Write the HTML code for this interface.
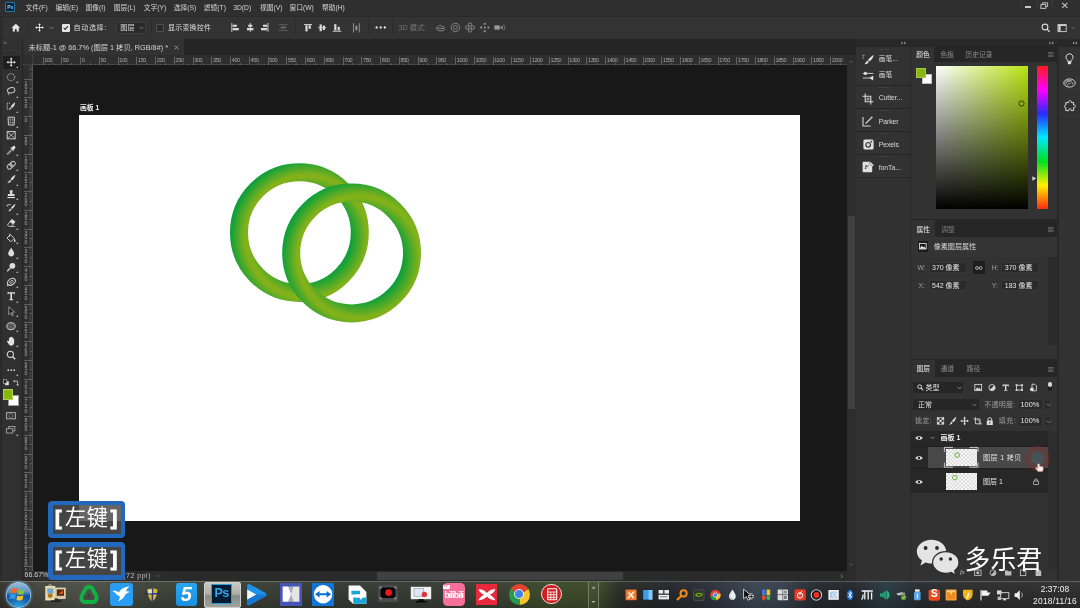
<!DOCTYPE html>
<html lang="zh-CN">
<head>
<meta charset="utf-8">
<title>未标题-1 @ 66.7% (图层 1 拷贝, RGB/8#) *</title>
<style>
*{box-sizing:border-box;margin:0;padding:0}
html,body{width:1080px;height:608px;overflow:hidden;background:#323232}
body{font-family:"Liberation Sans","Noto Sans CJK SC",sans-serif;font-size:6.75px;color:#d6d6d6;line-height:1}
#app{will-change:transform;position:relative;width:1080px;height:608px;overflow:hidden;background:#323232}
.a{position:absolute}
.t{position:absolute;white-space:nowrap;line-height:10px;height:10px}
svg{position:absolute;overflow:visible}
.hr i{position:absolute;top:1.5px;width:1px;height:8.5px;background:#626262}
.hr b{position:absolute;top:7.5px;width:1px;height:2.5px;background:#5a5a5a}
.hr span{position:absolute;top:0.2px;line-height:10px;letter-spacing:-0.35px;white-space:nowrap}
.vr i{position:absolute;left:1px;width:9px;height:1px;background:#5e5e5e}
.vr b{position:absolute;left:7px;width:3px;height:1px;background:#5a5a5a}
.vr span{position:absolute;left:0.8px;width:4px;line-height:4.7px;text-align:center}
</style>
</head>
<body>
<div id="app">
<!-- menu bar -->
<div class="a" style="left:0;top:0;width:1080px;height:16px;background:#2f2f2f"></div>
<!-- options bar -->
<div class="a" style="left:0;top:16px;width:1080px;height:23px;background:#333333;border-top:1px solid #2a2a2a"></div>
<!-- dark strip under options bar -->
<div class="a" style="left:0;top:39px;width:1080px;height:16px;background:#252525"></div>
<!-- tools panel -->
<div class="a" style="left:0;top:39px;width:22px;height:542px;background:#303030;border-left:2px solid #2a2a2a"></div>
<!-- document tab -->
<div class="a" style="left:23px;top:39px;width:161px;height:16px;background:#323232"></div>
<!-- rulers -->
<div class="a" style="left:23px;top:55px;width:824px;height:10px;background:#2e2e2e"></div>
<div class="a" style="left:23px;top:55px;width:10px;height:516px;background:#2e2e2e"></div>
<!-- canvas -->
<div class="a" style="left:33px;top:65px;width:814px;height:506px;background:#181818"></div>
<!-- artboard -->
<div class="a" style="left:79px;top:115px;width:721px;height:406px;background:#ffffff"></div>
<!-- status bar -->
<div class="a" style="left:23px;top:571px;width:833px;height:10px;background:#2c2c2c"></div>
<!-- v scrollbar -->
<div class="a" style="left:847px;top:55px;width:9px;height:516px;background:#2d2d2d"></div>
<div class="a" style="left:848px;top:216px;width:7px;height:193px;background:#404040"></div>
<!-- taskbar -->
<div class="a" style="left:0;top:581px;width:1080px;height:27px;background:#3a3f3c"></div>
<!-- artboard label -->
<div class="t" style="left:80px;top:102.9px;font-size:6.8px;font-weight:bold;color:#f0f0f0">画板 1</div>
<!-- rings -->
<svg class="a" style="left:79px;top:115px" width="721" height="406" viewBox="79 115 721 406">
  <defs>
    <radialGradient id="rg1" gradientUnits="userSpaceOnUse" cx="307.2" cy="237.1" r="78.4">
      <stop offset="0.56" stop-color="#0ea03a"/>
      <stop offset="0.76" stop-color="#82b11a"/>
      <stop offset="0.80" stop-color="#82b11a"/>
      <stop offset="0.98" stop-color="#0ea03a"/>
    </radialGradient>
    <radialGradient id="rg2" gradientUnits="userSpaceOnUse" cx="359.4" cy="257.5" r="78.4">
      <stop offset="0.56" stop-color="#0ea03a"/>
      <stop offset="0.76" stop-color="#82b11a"/>
      <stop offset="0.80" stop-color="#82b11a"/>
      <stop offset="0.98" stop-color="#0ea03a"/>
    </radialGradient>
  </defs>
  <circle cx="299.4" cy="232.6" r="60.4" fill="none" stroke="url(#rg1)" stroke-width="18"/>
  <circle cx="351.6" cy="253" r="60.4" fill="none" stroke="url(#rg2)" stroke-width="18"/>
</svg>
<!-- ===== menu bar ===== -->
<div class="a" style="left:5.3px;top:2.2px;width:9.8px;height:9.6px;background:#05223a;border:1px solid #2278aa;border-radius:1px"></div>
<div class="t" style="left:5.3px;top:2.1px;width:9.8px;text-align:center;font-size:5.2px;font-weight:bold;color:#8ccdf6;letter-spacing:-0.2px">Ps</div>
<div class="t" style="left:25.6px;top:2.5px">文件(F)</div>
<div class="t" style="left:55.6px;top:2.5px">编辑(E)</div>
<div class="t" style="left:85.6px;top:2.5px">图像(I)</div>
<div class="t" style="left:113.8px;top:2.5px">图层(L)</div>
<div class="t" style="left:143.8px;top:2.5px">文字(Y)</div>
<div class="t" style="left:173.8px;top:2.5px">选择(S)</div>
<div class="t" style="left:203.8px;top:2.5px">滤镜(T)</div>
<div class="t" style="left:233.2px;top:2.5px">3D(D)</div>
<div class="t" style="left:260px;top:2.5px">视图(V)</div>
<div class="t" style="left:289.4px;top:2.5px">窗口(W)</div>
<div class="t" style="left:321.9px;top:2.5px">帮助(H)</div>
<!-- window controls -->
<div class="a" style="left:1021px;top:0;width:1px;height:10px;background:#3a3a3a"></div>
<div class="a" style="left:1037px;top:0;width:1px;height:10px;background:#3a3a3a"></div>
<div class="a" style="left:1052px;top:0;width:1px;height:10px;background:#3a3a3a"></div>
<div class="a" style="left:1025px;top:6.3px;width:6px;height:1.3px;background:#c8c8c8"></div>
<svg style="left:1040px;top:2px" width="9" height="8" viewBox="0 0 9 8"><path d="M2.6 2.4V0.8H7.6V4.6H6" fill="none" stroke="#c0c0c0" stroke-width="1"/><rect x="0.9" y="2.6" width="4.8" height="3.8" fill="none" stroke="#c0c0c0" stroke-width="1"/></svg>
<svg style="left:1061px;top:2px" width="8" height="7" viewBox="0 0 8 7"><path d="M1.2 0.8L6.4 5.8M6.4 0.8L1.2 5.8" fill="none" stroke="#c4c4c4" stroke-width="1.1"/></svg>
<!-- ===== options bar ===== -->
<svg style="left:10.9px;top:22.6px" width="9.6" height="9.6" viewBox="0 0 12 12"><path d="M6 1L0.6 5.8H2.2V10.6H4.9V7.4H7.1V10.6H9.8V5.8H11.4Z" fill="#e4e4e4"/></svg>
<div class="a" style="left:27px;top:20px;width:1px;height:15px;background:#2e2e2e"></div><div class="a" style="left:0;top:17px;width:3px;height:22px;background:#2c2c2c"></div>
<svg style="left:35px;top:23px" width="9" height="9" viewBox="0 0 11 11"><path d="M5.5 0.2L7.3 2.4H6.1V4.9H8.6V3.7L10.8 5.5L8.6 7.3V6.1H6.1V8.6H7.3L5.5 10.8L3.7 8.6H4.9V6.1H2.4V7.3L0.2 5.5L2.4 3.7V4.9H4.9V2.4H3.7Z" fill="#e0e0e0"/></svg>
<svg style="left:49px;top:26px" width="5" height="4" viewBox="0 0 5 4"><path d="M0.6 0.8L2.5 2.8L4.4 0.8" fill="none" stroke="#8a8a8a" stroke-width="0.8"/></svg>
<div class="a" style="left:62px;top:24px;width:7.5px;height:7.5px;background:#e6e6e6;border-radius:1px"></div>
<svg style="left:62px;top:24px" width="7.5" height="7.5" viewBox="0 0 8 8"><path d="M1.8 4.1L3.4 5.7L6.3 2.3" fill="none" stroke="#303030" stroke-width="1.2"/></svg>
<div class="t" style="left:73.6px;top:22.6px;font-size:7px;letter-spacing:0.65px;color:#dedede">自动选择:</div>
<div class="a" style="left:116px;top:21.5px;width:30px;height:12.5px;background:#2a2a2a;border:1px solid #3e3e3e;border-radius:1.5px"></div>
<div class="t" style="left:120.3px;top:22.6px;font-size:7.2px;color:#dedede">图层</div>
<svg style="left:139px;top:26px" width="5" height="4" viewBox="0 0 5 4"><path d="M0.6 0.8L2.5 2.8L4.4 0.8" fill="none" stroke="#8a8a8a" stroke-width="0.8"/></svg>
<div class="a" style="left:151px;top:20px;width:1px;height:15px;background:#2a2a2a"></div>
<div class="a" style="left:156px;top:24px;width:7.5px;height:7.5px;background:#2c2c2c;border:1px solid #505050;border-radius:1px"></div>
<div class="t" style="left:168px;top:22.6px;font-size:7px;letter-spacing:0.2px;color:#dedede">显示变换控件</div>
<!-- align icons -->
<svg style="left:231px;top:22px" width="60" height="12" viewBox="0 0 60 12">
  <g fill="#dadada">
    <rect x="0.4" y="1" width="0.9" height="8.8"/><rect x="1.7" y="2.7" width="4.1" height="2.1"/><rect x="1.7" y="6" width="6.1" height="2.3"/>
    <rect x="18.8" y="1" width="0.9" height="8.8"/><rect x="17.2" y="2.7" width="4.1" height="2.1"/><rect x="16" y="6" width="6.4" height="2.3"/>
    <rect x="36.5" y="1" width="0.9" height="8.8"/><rect x="32" y="2.7" width="4.1" height="2.1"/><rect x="30" y="6" width="6.1" height="2.3"/>
  </g>
  <g fill="#686868">
    <rect x="48" y="2.3" width="8.6" height="0.8"/><rect x="49.6" y="4.5" width="5.4" height="2"/><rect x="48" y="8" width="8.6" height="0.8"/>
  </g>
</svg>
<div class="a" style="left:295px;top:20px;width:1px;height:15px;background:#2a2a2a"></div>
<svg style="left:303px;top:22px" width="60" height="12" viewBox="0 0 60 12">
  <g fill="#dadada">
    <rect x="1" y="2" width="8" height="0.9"/><rect x="2.4" y="3.2" width="2.2" height="6.2"/><rect x="5.6" y="3.2" width="2.2" height="3.6"/>
    <rect x="15.2" y="5.3" width="8" height="0.9"/><rect x="16.6" y="2.4" width="2.2" height="6.8"/><rect x="19.8" y="3.6" width="2.2" height="4.4"/>
    <rect x="29.8" y="8.8" width="8.4" height="0.9"/><rect x="31.2" y="2.2" width="2.2" height="6.2"/><rect x="34.6" y="4.8" width="2.2" height="3.6"/>
  </g>
  <g fill="#989898">
    <rect x="50" y="1.2" width="0.9" height="9.2"/><rect x="52.4" y="3.6" width="1.9" height="4.6"/><rect x="55.8" y="1.2" width="0.9" height="9.2"/>
  </g>
</svg>
<div class="a" style="left:368px;top:20px;width:1px;height:15px;background:#2a2a2a"></div>
<svg style="left:375px;top:26px" width="12" height="3" viewBox="0 0 12 3"><circle cx="1.6" cy="1.5" r="1.15" fill="#e6e6e6"/><circle cx="5.7" cy="1.5" r="1.15" fill="#e6e6e6"/><circle cx="9.8" cy="1.5" r="1.15" fill="#e6e6e6"/></svg>
<div class="a" style="left:392px;top:20px;width:1px;height:15px;background:#2a2a2a"></div>
<div class="t" style="left:398.6px;top:22.6px;font-size:7.2px;color:#747474">3D 模式:</div>
<svg style="left:435px;top:21px" width="72" height="13" viewBox="0 0 72 13">
  <g fill="none" stroke="#8c8c8c" stroke-width="0.9">
    <path d="M2 8.6C0.6 8 1 6 2.8 6.2C3 4.2 6 3.6 7 5.4C8.8 5 9.8 6.8 8.8 8.2"/><ellipse cx="5.8" cy="8.6" rx="3.4" ry="1.3"/>
    <circle cx="20.4" cy="6.5" r="4.2"/><circle cx="20.4" cy="6.5" r="1.9"/>
    <circle cx="35" cy="3.6" r="1.7"/><circle cx="35" cy="9.4" r="1.7"/><circle cx="32.1" cy="6.5" r="1.7"/><circle cx="37.9" cy="6.5" r="1.7"/>
  </g>
  <g fill="#9a9a9a">
    <path d="M49.8 1.6L51.6 3.6H48Z M49.8 11.4L51.6 9.4H48Z M44.9 6.5L46.9 4.7V8.3Z M54.7 6.5L52.7 4.7V8.3Z"/><rect x="48.9" y="5.6" width="1.8" height="1.8"/>
    <rect x="59.4" y="4.4" width="5.4" height="4.2"/><path d="M65.2 6.5L67.6 4.6V8.4Z"/>
  </g>
  <path d="M68.6 3.6C69.8 5.4 69.8 7.6 68.6 9.4" fill="none" stroke="#8c8c8c" stroke-width="0.7"/>
</svg>
<!-- search & workspace -->
<svg style="left:1041px;top:23px" width="10" height="10" viewBox="0 0 10 10"><circle cx="4" cy="4" r="2.9" fill="none" stroke="#d8d8d8" stroke-width="1.1"/><path d="M6.1 6.2L8.6 8.8" stroke="#d8d8d8" stroke-width="1.3" fill="none"/></svg>
<svg style="left:1057px;top:24px" width="20" height="9" viewBox="0 0 20 9"><rect x="1" y="0.6" width="8.2" height="7" fill="none" stroke="#d0d0d0" stroke-width="0.9"/><rect x="1.4" y="1" width="2.2" height="6.2" fill="#d0d0d0"/><rect x="1" y="0.6" width="8.2" height="1.4" fill="#d0d0d0"/><path d="M14.6 3L16.2 4.6L17.8 3" fill="none" stroke="#7c7c7c" stroke-width="0.8"/></svg>
<!-- ===== document tab ===== -->
<div class="t" style="left:28.4px;top:42.8px;font-size:7.3px;color:#d4d4d4">未标题-1 @ 66.7% (图层 1 拷贝, RGB/8#) *</div>
<svg style="left:174px;top:45.4px" width="5" height="5" viewBox="0 0 5 5"><path d="M0.7 0.7L4.3 4.3M4.3 0.7L0.7 4.3" stroke="#a8a8a8" stroke-width="0.8" fill="none"/></svg>
<!-- ===== horizontal ruler ===== -->
<div class="a" style="left:33px;top:64px;width:814px;height:1px;background:repeating-linear-gradient(90deg,#5c5c5c 0,#5c5c5c 0.9px,#363636 0.9px,#363636 1.875px)"></div>
<div class="a hr" style="left:23px;top:55px;width:824px;height:10px;overflow:hidden;font-size:5.5px;color:#a8a8a8">
<i style="left:0.95px"></i><b style="left:10.33px"></b>
<i style="left:19.70px"></i><span style="left:21.20px">100</span><b style="left:29.08px"></b>
<i style="left:38.45px"></i><span style="left:39.95px">50</span><b style="left:47.83px"></b>
<i style="left:57.20px"></i><span style="left:58.70px">0</span><b style="left:66.58px"></b>
<i style="left:75.95px"></i><span style="left:77.45px">50</span><b style="left:85.33px"></b>
<i style="left:94.70px"></i><span style="left:96.20px">100</span><b style="left:104.08px"></b>
<i style="left:113.45px"></i><span style="left:114.95px">150</span><b style="left:122.82px"></b>
<i style="left:132.20px"></i><span style="left:133.70px">200</span><b style="left:141.57px"></b>
<i style="left:150.95px"></i><span style="left:152.45px">250</span><b style="left:160.32px"></b>
<i style="left:169.70px"></i><span style="left:171.20px">300</span><b style="left:179.07px"></b>
<i style="left:188.45px"></i><span style="left:189.95px">350</span><b style="left:197.82px"></b>
<i style="left:207.20px"></i><span style="left:208.70px">400</span><b style="left:216.57px"></b>
<i style="left:225.95px"></i><span style="left:227.45px">450</span><b style="left:235.32px"></b>
<i style="left:244.70px"></i><span style="left:246.20px">500</span><b style="left:254.07px"></b>
<i style="left:263.45px"></i><span style="left:264.95px">550</span><b style="left:272.82px"></b>
<i style="left:282.20px"></i><span style="left:283.70px">600</span><b style="left:291.57px"></b>
<i style="left:300.95px"></i><span style="left:302.45px">650</span><b style="left:310.32px"></b>
<i style="left:319.70px"></i><span style="left:321.20px">700</span><b style="left:329.07px"></b>
<i style="left:338.45px"></i><span style="left:339.95px">750</span><b style="left:347.82px"></b>
<i style="left:357.20px"></i><span style="left:358.70px">800</span><b style="left:366.57px"></b>
<i style="left:375.95px"></i><span style="left:377.45px">850</span><b style="left:385.32px"></b>
<i style="left:394.70px"></i><span style="left:396.20px">900</span><b style="left:404.07px"></b>
<i style="left:413.45px"></i><span style="left:414.95px">950</span><b style="left:422.82px"></b>
<i style="left:432.20px"></i><span style="left:433.70px">1000</span><b style="left:441.57px"></b>
<i style="left:450.95px"></i><span style="left:452.45px">1050</span><b style="left:460.32px"></b>
<i style="left:469.70px"></i><span style="left:471.20px">1100</span><b style="left:479.07px"></b>
<i style="left:488.45px"></i><span style="left:489.95px">1150</span><b style="left:497.82px"></b>
<i style="left:507.20px"></i><span style="left:508.70px">1200</span><b style="left:516.58px"></b>
<i style="left:525.95px"></i><span style="left:527.45px">1250</span><b style="left:535.33px"></b>
<i style="left:544.70px"></i><span style="left:546.20px">1300</span><b style="left:554.08px"></b>
<i style="left:563.45px"></i><span style="left:564.95px">1350</span><b style="left:572.83px"></b>
<i style="left:582.20px"></i><span style="left:583.70px">1400</span><b style="left:591.58px"></b>
<i style="left:600.95px"></i><span style="left:602.45px">1450</span><b style="left:610.33px"></b>
<i style="left:619.70px"></i><span style="left:621.20px">1500</span><b style="left:629.08px"></b>
<i style="left:638.45px"></i><span style="left:639.95px">1550</span><b style="left:647.83px"></b>
<i style="left:657.20px"></i><span style="left:658.70px">1600</span><b style="left:666.58px"></b>
<i style="left:675.95px"></i><span style="left:677.45px">1650</span><b style="left:685.33px"></b>
<i style="left:694.70px"></i><span style="left:696.20px">1700</span><b style="left:704.08px"></b>
<i style="left:713.45px"></i><span style="left:714.95px">1750</span><b style="left:722.83px"></b>
<i style="left:732.20px"></i><span style="left:733.70px">1800</span><b style="left:741.58px"></b>
<i style="left:750.95px"></i><span style="left:752.45px">1850</span><b style="left:760.33px"></b>
<i style="left:769.70px"></i><span style="left:771.20px">1900</span><b style="left:779.08px"></b>
<i style="left:788.45px"></i><span style="left:789.95px">1950</span><b style="left:797.83px"></b>
<i style="left:807.20px"></i><span style="left:808.70px">2000</span><b style="left:816.58px"></b>
</div>
<!-- ===== vertical ruler ===== -->
<div class="a" style="left:28.6px;top:65px;width:3.6px;height:506px;background:repeating-linear-gradient(180deg,#474747 0,#474747 0.8px,#2e2e2e 0.8px,#2e2e2e 1.875px);background-position:0 0.45px"></div><div class="a" style="left:32px;top:65px;width:1px;height:506px;background:#545454"></div>
<div class="a vr" style="left:23px;top:65px;width:10px;height:506px;overflow:hidden;font-size:5.1px;color:#a6a6a6">
<i style="top:-5.05px"></i><b style="top:4.33px"></b>
<i style="top:13.70px"></i><span style="top:15.50px">1<br>0<br>0</span><b style="top:23.08px"></b>
<i style="top:32.45px"></i><span style="top:34.25px">5<br>0</span><b style="top:41.83px"></b>
<i style="top:51.20px"></i><span style="top:53.00px">0</span><b style="top:60.58px"></b>
<i style="top:69.95px"></i><span style="top:71.75px">5<br>0</span><b style="top:79.32px"></b>
<i style="top:88.70px"></i><span style="top:90.50px">1<br>0<br>0</span><b style="top:98.07px"></b>
<i style="top:107.45px"></i><span style="top:109.25px">1<br>5<br>0</span><b style="top:116.82px"></b>
<i style="top:126.20px"></i><span style="top:128.00px">2<br>0<br>0</span><b style="top:135.57px"></b>
<i style="top:144.95px"></i><span style="top:146.75px">2<br>5<br>0</span><b style="top:154.32px"></b>
<i style="top:163.70px"></i><span style="top:165.50px">3<br>0<br>0</span><b style="top:173.07px"></b>
<i style="top:182.45px"></i><span style="top:184.25px">3<br>5<br>0</span><b style="top:191.82px"></b>
<i style="top:201.20px"></i><span style="top:203.00px">4<br>0<br>0</span><b style="top:210.57px"></b>
<i style="top:219.95px"></i><span style="top:221.75px">4<br>5<br>0</span><b style="top:229.32px"></b>
<i style="top:238.70px"></i><span style="top:240.50px">5<br>0<br>0</span><b style="top:248.07px"></b>
<i style="top:257.45px"></i><span style="top:259.25px">5<br>5<br>0</span><b style="top:266.82px"></b>
<i style="top:276.20px"></i><span style="top:278.00px">6<br>0<br>0</span><b style="top:285.57px"></b>
<i style="top:294.95px"></i><span style="top:296.75px">6<br>5<br>0</span><b style="top:304.32px"></b>
<i style="top:313.70px"></i><span style="top:315.50px">7<br>0<br>0</span><b style="top:323.07px"></b>
<i style="top:332.45px"></i><span style="top:334.25px">7<br>5<br>0</span><b style="top:341.82px"></b>
<i style="top:351.20px"></i><span style="top:353.00px">8<br>0<br>0</span><b style="top:360.57px"></b>
<i style="top:369.95px"></i><span style="top:371.75px">8<br>5<br>0</span><b style="top:379.32px"></b>
<i style="top:388.70px"></i><span style="top:390.50px">9<br>0<br>0</span><b style="top:398.07px"></b>
<i style="top:407.45px"></i><span style="top:409.25px">9<br>5<br>0</span><b style="top:416.82px"></b>
<i style="top:426.20px"></i><span style="top:428.00px">1<br>0<br>0<br>0</span><b style="top:435.57px"></b>
<i style="top:444.95px"></i><span style="top:446.75px">1<br>0<br>5<br>0</span><b style="top:454.32px"></b>
<i style="top:463.70px"></i><span style="top:465.50px">1<br>1<br>0<br>0</span><b style="top:473.08px"></b>
<i style="top:482.45px"></i><span style="top:484.25px">1<br>1<br>5<br>0</span><b style="top:491.83px"></b>
<i style="top:501.20px"></i><span style="top:503.00px">1<br>2<br>0<br>0</span><b style="top:510.58px"></b>
</div>
<div class="a" style="left:23px;top:55px;width:10px;height:10px;background:#2e2e2e;border-right:1px dotted #4a4a4a;border-bottom:1px dotted #4a4a4a"></div>
<!-- ===== tools panel ===== -->
<div class="a" style="left:21.5px;top:39px;width:1.5px;height:542px;background:#232323"></div>
<svg style="left:3.2px;top:41.4px" width="4.4" height="3.6" viewBox="0 0 6 5"><path d="M0.6 0.8L2.3 2.5L0.6 4.2M3.2 0.8L4.9 2.5L3.2 4.2" fill="none" stroke="#8c8c8c" stroke-width="1"/></svg>
<div class="a" style="left:2px;top:49.5px;width:18px;height:1px;background:#3a3a3a"></div>
<div class="a" style="left:2.5px;top:55.5px;width:17px;height:13.5px;background:#1e1e1e;border-radius:1px"></div>
<svg style="left:6.2px;top:56.8px" width="10.4" height="10.4" viewBox="0 0 12 12"><path d="M6 0.6L7.7 2.7H6.6V5.4H9.3V4.3L11.4 6L9.3 7.7V6.6H6.6V9.3H7.7L6 11.4L4.3 9.3H5.4V6.6H2.7V7.7L0.6 6L2.7 4.3V5.4H5.4V2.7H4.3Z" fill="#e2e2e2"/></svg>
<svg style="left:16.4px;top:66.2px" width="2" height="2" viewBox="0 0 2 2"><path d="M2 0V2H0Z" fill="#b8b8b8"/></svg>
<svg style="left:6.2px;top:71.8px" width="10.4" height="10.4" viewBox="0 0 12 12"><ellipse cx="5.8" cy="6" rx="4.3" ry="4" fill="none" stroke="#d2d2d2" stroke-width="1" stroke-dasharray="1.6 1"/></svg>
<svg style="left:16.4px;top:81.2px" width="2" height="2" viewBox="0 0 2 2"><path d="M2 0V2H0Z" fill="#b8b8b8"/></svg>
<svg style="left:6.2px;top:86.1px" width="10.4" height="10.4" viewBox="0 0 12 12"><ellipse cx="6" cy="5" rx="4.3" ry="3" fill="none" stroke="#d2d2d2" stroke-width="1.1" transform="rotate(-15 6 5)"/><path d="M3 7.4C2 8.4 2.6 9.6 3.6 10.6" fill="none" stroke="#d2d2d2" stroke-width="1"/></svg>
<svg style="left:16.4px;top:95.5px" width="2" height="2" viewBox="0 0 2 2"><path d="M2 0V2H0Z" fill="#b8b8b8"/></svg>
<svg style="left:6.2px;top:101.4px" width="10.4" height="10.4" viewBox="0 0 12 12"><path d="M4.6 2.4H1.4V9.4H6" fill="none" stroke="#d2d2d2" stroke-width="1" stroke-dasharray="1.5 0.9"/><path d="M10.6 1.4C9 2 6.6 4.6 5.4 6.6L7 8C8.8 6.8 10.6 4 10.6 1.4Z" fill="#e0e0e0"/><path d="M5 7.2L6.4 8.6C5.6 9.6 4.4 9.6 3.8 9.4C4.4 8.8 4.4 7.8 5 7.2Z" fill="#e0e0e0"/></svg>
<svg style="left:16.4px;top:110.8px" width="2" height="2" viewBox="0 0 2 2"><path d="M2 0V2H0Z" fill="#b8b8b8"/></svg>
<svg style="left:6.2px;top:116.1px" width="10.4" height="10.4" viewBox="0 0 12 12"><path d="M2.4 1.4L2.8 10.4H9.4L9.8 1.4Z" fill="none" stroke="#d2d2d2" stroke-width="1.1"/><path d="M4.8 1.6V10.2M7.4 1.6V10.2M2.6 4.4H9.6M2.7 7.4H9.5" fill="none" stroke="#d2d2d2" stroke-width="0.6" opacity="0.7"/></svg>
<svg style="left:16.4px;top:125.5px" width="2" height="2" viewBox="0 0 2 2"><path d="M2 0V2H0Z" fill="#b8b8b8"/></svg>
<svg style="left:6.2px;top:130.4px" width="10.4" height="10.4" viewBox="0 0 12 12"><rect x="1.4" y="1.8" width="9.2" height="8.4" fill="none" stroke="#d2d2d2" stroke-width="1.1"/><path d="M1.6 2L10.4 10M10.4 2L1.6 10" stroke="#d2d2d2" stroke-width="0.9" fill="none"/></svg>
<svg style="left:6.2px;top:145.0px" width="10.4" height="10.4" viewBox="0 0 12 12"><path d="M10.2 1.2C11.2 2.2 11 3.4 10.2 4.2L8.8 5.6L9.4 6.2L8.6 7L5 3.4L5.8 2.6L6.4 3.2L7.8 1.8C8.6 1 9.6 0.8 10.2 1.2Z" fill="#e0e0e0"/><path d="M6.2 5L2 9.2L1.6 10.6L3 10.2L7.2 6" fill="none" stroke="#d2d2d2" stroke-width="1"/></svg>
<svg style="left:16.4px;top:154.4px" width="2" height="2" viewBox="0 0 2 2"><path d="M2 0V2H0Z" fill="#b8b8b8"/></svg>
<svg style="left:6.2px;top:159.6px" width="10.4" height="10.4" viewBox="0 0 12 12"><rect x="0.6" y="3.6" width="10.8" height="5" rx="2.3" fill="none" stroke="#d2d2d2" stroke-width="1.1" transform="rotate(-42 6 6)"/><rect x="4.2" y="4.2" width="3.6" height="3.6" fill="#d2d2d2" opacity="0.75" transform="rotate(-42 6 6)"/></svg>
<svg style="left:16.4px;top:169.0px" width="2" height="2" viewBox="0 0 2 2"><path d="M2 0V2H0Z" fill="#b8b8b8"/></svg>
<svg style="left:6.2px;top:174.1px" width="10.4" height="10.4" viewBox="0 0 12 12"><path d="M10.8 1C9 1.6 6.4 4.4 5.2 6.2L6.6 7.6C8.6 6.4 10.6 3.4 10.8 1Z" fill="#e0e0e0"/><path d="M4.6 6.8L6 8.2C5.2 9.8 3.2 10.6 1.4 10.4C2.6 9.6 3 8 4.6 6.8Z" fill="#e0e0e0"/></svg>
<svg style="left:16.4px;top:183.5px" width="2" height="2" viewBox="0 0 2 2"><path d="M2 0V2H0Z" fill="#b8b8b8"/></svg>
<svg style="left:6.2px;top:188.8px" width="10.4" height="10.4" viewBox="0 0 12 12"><path d="M4.4 1.4H7.6V3.6L7 5.8H9.8V8.2H2.2V5.8H5L4.4 3.6Z" fill="#e0e0e0"/><rect x="1.6" y="9.2" width="8.8" height="1.3" fill="#e0e0e0"/></svg>
<svg style="left:16.4px;top:198.2px" width="2" height="2" viewBox="0 0 2 2"><path d="M2 0V2H0Z" fill="#b8b8b8"/></svg>
<svg style="left:6.2px;top:203.4px" width="10.4" height="10.4" viewBox="0 0 12 12"><path d="M10.8 1C9.2 1.6 7 4 5.8 5.8L7 7C8.8 5.8 10.6 3.2 10.8 1Z" fill="#e0e0e0"/><path d="M5.2 6.4L6.4 7.6C5.8 9 4 9.8 2.6 9.6C3.6 9 3.8 7.4 5.2 6.4Z" fill="#e0e0e0"/><path d="M1.2 3.2C2.4 1.6 4.2 1.4 5.6 2.2" fill="none" stroke="#d2d2d2" stroke-width="1"/><path d="M0.6 1.6L1 3.8L3.2 3.4Z" fill="#d2d2d2"/></svg>
<svg style="left:16.4px;top:212.8px" width="2" height="2" viewBox="0 0 2 2"><path d="M2 0V2H0Z" fill="#b8b8b8"/></svg>
<svg style="left:6.2px;top:218.1px" width="10.4" height="10.4" viewBox="0 0 12 12"><path d="M6.6 1.6L10.4 4.2L6.6 9.6H3.4L1.6 8.2Z" fill="none" stroke="#d2d2d2" stroke-width="1"/><path d="M6.6 1.6L10.4 4.2L8.2 7.2L4.4 4.6Z" fill="#e0e0e0"/><path d="M6 9.8H10.8" stroke="#d2d2d2" stroke-width="0.9"/></svg>
<svg style="left:16.4px;top:227.5px" width="2" height="2" viewBox="0 0 2 2"><path d="M2 0V2H0Z" fill="#b8b8b8"/></svg>
<svg style="left:6.2px;top:232.8px" width="10.4" height="10.4" viewBox="0 0 12 12"><path d="M5 1.8L9.6 6.2L5.6 10.2L1.2 5.8Z" fill="none" stroke="#d2d2d2" stroke-width="1.1"/><path d="M4.2 0.8V4.6" stroke="#d2d2d2" stroke-width="1" fill="none"/><path d="M9.8 6.6C10.8 7.8 11.2 8.6 11 9.6C10.6 10.6 9.4 10.4 9.2 9.4C9 8.6 9.4 7.6 9.8 6.6Z" fill="#e0e0e0"/></svg>
<svg style="left:16.4px;top:242.2px" width="2" height="2" viewBox="0 0 2 2"><path d="M2 0V2H0Z" fill="#b8b8b8"/></svg>
<svg style="left:6.2px;top:247.3px" width="10.4" height="10.4" viewBox="0 0 12 12"><path d="M6 1C7.4 3.4 9.4 5.4 9.4 7.6C9.4 9.6 7.8 10.9 6 10.9C4.2 10.9 2.6 9.6 2.6 7.6C2.6 5.4 4.6 3.4 6 1Z" fill="#dcdcdc"/></svg>
<svg style="left:16.4px;top:256.7px" width="2" height="2" viewBox="0 0 2 2"><path d="M2 0V2H0Z" fill="#b8b8b8"/></svg>
<svg style="left:6.2px;top:261.8px" width="10.4" height="10.4" viewBox="0 0 12 12"><circle cx="7.4" cy="4.4" r="3.3" fill="#dcdcdc"/><path d="M5 6.8L1.4 10.6" stroke="#dcdcdc" stroke-width="1.5" fill="none"/></svg>
<svg style="left:16.4px;top:271.2px" width="2" height="2" viewBox="0 0 2 2"><path d="M2 0V2H0Z" fill="#b8b8b8"/></svg>
<svg style="left:6.2px;top:276.6px" width="10.4" height="10.4" viewBox="0 0 12 12"><ellipse cx="6.2" cy="5.6" rx="5" ry="3.4" fill="none" stroke="#d2d2d2" stroke-width="1.2" transform="rotate(-35 6.2 5.6)"/><ellipse cx="6.2" cy="5.6" rx="2.2" ry="1.3" fill="none" stroke="#d2d2d2" stroke-width="0.9" transform="rotate(-35 6.2 5.6)"/><path d="M2.4 8.4L1.2 10.8" stroke="#d2d2d2" stroke-width="1"/></svg>
<svg style="left:16.4px;top:286.0px" width="2" height="2" viewBox="0 0 2 2"><path d="M2 0V2H0Z" fill="#b8b8b8"/></svg>
<svg style="left:6.2px;top:291.2px" width="10.4" height="10.4" viewBox="0 0 12 12"><path d="M1.8 1.4H10.2V3.8H9.2V2.8H6.9V9.4H8.2V10.6H3.8V9.4H5.1V2.8H2.8V3.8H1.8Z" fill="#e4e4e4"/></svg>
<svg style="left:16.4px;top:300.6px" width="2" height="2" viewBox="0 0 2 2"><path d="M2 0V2H0Z" fill="#b8b8b8"/></svg>
<svg style="left:6.2px;top:306.0px" width="10.4" height="10.4" viewBox="0 0 12 12"><path d="M3.2 0.8L3.2 10L5.4 7.8L7 11.2L8.4 10.5L6.8 7.2L9.8 7Z" fill="#1c1c1c" stroke="#c4c4c4" stroke-width="0.8"/></svg>
<svg style="left:16.4px;top:315.4px" width="2" height="2" viewBox="0 0 2 2"><path d="M2 0V2H0Z" fill="#b8b8b8"/></svg>
<svg style="left:6.2px;top:320.8px" width="10.4" height="10.4" viewBox="0 0 12 12"><ellipse cx="5.8" cy="6" rx="4.8" ry="4" fill="#5a5a5a" stroke="#d2d2d2" stroke-width="1.1"/></svg>
<svg style="left:16.4px;top:330.2px" width="2" height="2" viewBox="0 0 2 2"><path d="M2 0V2H0Z" fill="#b8b8b8"/></svg>
<svg style="left:6.2px;top:335.8px" width="10.4" height="10.4" viewBox="0 0 12 12"><path d="M3.4 6.2V2.6C3.4 1.8 4.6 1.8 4.6 2.6V1.6C4.6 0.8 5.8 0.8 5.8 1.6V1.4C5.8 0.6 7 0.6 7 1.4V2C7 1.2 8.2 1.2 8.2 2V3.4C8.2 2.6 9.4 2.6 9.4 3.4V7.6C9.4 9.6 8.2 11.2 6.2 11.2C4.6 11.2 3.8 10.4 3 9.2L1.2 6.4C0.8 5.6 1.8 5 2.4 5.6Z" fill="#e0e0e0"/></svg>
<svg style="left:16.4px;top:345.2px" width="2" height="2" viewBox="0 0 2 2"><path d="M2 0V2H0Z" fill="#b8b8b8"/></svg>
<svg style="left:6.2px;top:350.4px" width="10.4" height="10.4" viewBox="0 0 12 12"><circle cx="5" cy="5" r="3.6" fill="none" stroke="#dadada" stroke-width="1.2"/><path d="M7.6 7.8L10.6 10.8" stroke="#dadada" stroke-width="1.6" fill="none"/></svg>
<svg style="left:6.2px;top:365.0px" width="10.4" height="10.4" viewBox="0 0 12 12"><circle cx="2.6" cy="6" r="1" fill="#dcdcdc"/><circle cx="6" cy="6" r="1" fill="#dcdcdc"/><circle cx="9.4" cy="6" r="1" fill="#dcdcdc"/></svg>
<svg style="left:16.4px;top:374.4px" width="2" height="2" viewBox="0 0 2 2"><path d="M2 0V2H0Z" fill="#b8b8b8"/></svg>
<svg style="left:3px;top:379px" width="18" height="8" viewBox="0 0 18 8"><rect x="2.2" y="2.6" width="3.4" height="3.4" fill="#e8e8e8" stroke="#cfcfcf" stroke-width="0.5"/><rect x="0.4" y="0.8" width="3.4" height="3.4" fill="#1a1a1a" stroke="#cfcfcf" stroke-width="0.6"/><path d="M11.4 2.2H14.6V5.6" fill="none" stroke="#cfcfcf" stroke-width="0.8"/><path d="M11.6 0.8L10 2.2L11.6 3.6Z M13.2 5.2L14.6 6.9L16 5.2Z" fill="#cfcfcf"/></svg>
<div class="a" style="left:8.2px;top:395px;width:10.6px;height:10.6px;background:#ffffff;border:0.6px solid #9a9a9a"></div>
<div class="a" style="left:2.6px;top:389.4px;width:10.6px;height:10.6px;background:#88b80e;border:1px solid #b4d060"></div>
<svg style="left:6.2px;top:411.8px" width="10" height="7.5" viewBox="0 0 12 9"><rect x="0.8" y="0.8" width="10.4" height="7.4" fill="none" stroke="#c8c8c8" stroke-width="1"/><circle cx="6" cy="4.5" r="2.3" fill="none" stroke="#c8c8c8" stroke-width="0.8" stroke-dasharray="1 0.7"/></svg>
<svg style="left:6px;top:426.4px" width="10" height="8.4" viewBox="0 0 13 11"><rect x="3.6" y="0.8" width="8" height="5.6" fill="none" stroke="#c8c8c8" stroke-width="0.9"/><rect x="0.8" y="3.6" width="8" height="5.6" fill="#2d2d2d" stroke="#c8c8c8" stroke-width="0.9"/></svg>
<svg style="left:16.4px;top:434px" width="2" height="2" viewBox="0 0 2 2"><path d="M2 0V2H0Z" fill="#b8b8b8"/></svg>
<!-- ===== right side frame ===== -->
<div class="a" style="left:856px;top:39px;width:224px;height:542px;background:#282828"></div>
<!-- collapsed panel column -->
<div class="a" style="left:856px;top:46.5px;width:53.5px;height:534.5px;background:#313131"></div>
<div class="a" style="left:856px;top:46.5px;width:53.5px;height:130px;background:#323232"></div>
<svg style="left:901px;top:40.5px" width="6" height="4" viewBox="0 0 6 4"><path d="M0.4 0.4L2.2 2L0.4 3.6ZM3.2 0.4L5 2L3.2 3.6Z" fill="#9a9a9a"/></svg>
<div class="a" style="left:878px;top:48.6px;width:11px;height:1px;background:#3e3e3e"></div>
<div class="a" style="left:856px;top:84.5px;width:53.5px;height:1px;background:#262626"></div>
<div class="a" style="left:878px;top:87px;width:11px;height:1px;background:#3e3e3e"></div>
<div class="a" style="left:856px;top:107.5px;width:53.5px;height:1px;background:#262626"></div>
<div class="a" style="left:878px;top:110px;width:11px;height:1px;background:#3e3e3e"></div>
<div class="a" style="left:856px;top:130.5px;width:53.5px;height:1px;background:#262626"></div>
<div class="a" style="left:878px;top:133px;width:11px;height:1px;background:#3e3e3e"></div>
<div class="a" style="left:856px;top:153.5px;width:53.5px;height:1px;background:#262626"></div>
<div class="a" style="left:878px;top:156px;width:11px;height:1px;background:#3e3e3e"></div>
<div class="a" style="left:856px;top:176.5px;width:53.5px;height:1px;background:#262626"></div>
<!-- collapsed panel icons -->
<svg style="left:862px;top:54px" width="13" height="11" viewBox="0 0 13 11"><path d="M0.6 1.4H2.6M0.6 3H2M0.6 4.6H1.6" stroke="#c8c8c8" stroke-width="0.7" fill="none"/><path d="M11.8 1C10 1.8 7.4 4.2 6 6L7.4 7.4C9.4 6.2 11.4 3.4 11.8 1Z" fill="#e0e0e0"/><path d="M5.4 6.6L6.8 8C6 9.6 4 10.4 2.4 10.2C3.6 9.4 4 7.8 5.4 6.6Z" fill="#e0e0e0"/></svg>
<svg style="left:862px;top:70.5px" width="13" height="10" viewBox="0 0 13 10"><path d="M0.8 2.4H11.4" stroke="#d8d8d8" stroke-width="0.9"/><circle cx="3.4" cy="2.4" r="1.6" fill="#e0e0e0"/><path d="M0.8 7H11.4" stroke="#d8d8d8" stroke-width="0.9"/><path d="M11.2 4.6V9.4L7.4 7Z" fill="#e0e0e0"/></svg>
<svg style="left:862px;top:92.5px" width="12" height="12" viewBox="0 0 12 12"><path d="M3.2 0.6V8.8H11.4M0.6 3.2H8.8V11.4" fill="none" stroke="#d8d8d8" stroke-width="1.1"/><rect x="4.6" y="4.6" width="2.8" height="2.8" fill="#9a9a9a"/></svg>
<svg style="left:862px;top:116px" width="12" height="11" viewBox="0 0 12 11"><path d="M1 1V10H8.6" fill="none" stroke="#d8d8d8" stroke-width="1.1"/><path d="M3.6 7.6L10.4 0.8" stroke="#d8d8d8" stroke-width="1.3" fill="none"/></svg>
<svg style="left:863px;top:139px" width="11" height="11" viewBox="0 0 11 11"><rect x="0.4" y="0.4" width="10.2" height="10.2" rx="1.6" fill="#e0e0e0"/><circle cx="5.2" cy="5.8" r="2.3" fill="none" stroke="#323232" stroke-width="1.2"/><circle cx="8.4" cy="2.6" r="0.9" fill="#323232"/></svg>
<svg style="left:862px;top:161px" width="13" height="12" viewBox="0 0 13 12"><path d="M1.6 0.8H7.6L10.2 3.4V10.2C10.2 10.8 9.8 11.2 9.2 11.2H1.6C1 11.2 0.6 10.8 0.6 10.2V1.8C0.6 1.2 1 0.8 1.6 0.8Z" fill="#e0e0e0"/><path d="M8.4 0.6L12.2 4.4L10.2 5.4L7.6 2.8Z" fill="#e0e0e0" stroke="#323232" stroke-width="0.5"/></svg>
<div class="t" style="left:864.4px;top:162px;font-size:6.4px;font-family:'Liberation Serif',serif;font-style:italic;font-weight:bold;color:#323232">F</div>
<div class="t" style="left:878.7px;top:54.4px;color:#dcdcdc">画笔...</div>
<div class="t" style="left:878.7px;top:70.4px;color:#dcdcdc">画笔</div>
<div class="t" style="left:878.7px;top:93.2px;color:#dcdcdc">Cutter...</div>
<div class="t" style="left:878.7px;top:116.5px;color:#dcdcdc">Parker</div>
<div class="t" style="left:878.7px;top:139.6px;color:#dcdcdc">Pexels</div>
<div class="t" style="left:878.7px;top:162.7px;color:#dcdcdc">fonTa...</div>
<!-- main panel column background -->
<div class="a" style="left:911.3px;top:46.5px;width:145.4px;height:534.5px;background:#323232"></div>
<svg style="left:1048.6px;top:40.5px" width="6" height="4" viewBox="0 0 6 4"><path d="M0.4 0.4L2.2 2L0.4 3.6ZM3.2 0.4L5 2L3.2 3.6Z" fill="#9a9a9a"/></svg>
<svg style="left:1071.6px;top:40.5px" width="6" height="4" viewBox="0 0 6 4"><path d="M2.2 0.4L0.4 2L2.2 3.6ZM5 0.4L3.2 2L5 3.6Z" fill="#9a9a9a"/></svg>
<!-- far right icon strip -->
<div class="a" style="left:1058.5px;top:46.5px;width:21.5px;height:534.5px;background:#323232"></div>
<div class="a" style="left:1058.5px;top:71px;width:21.5px;height:1px;background:#2d2d2d"></div>
<div class="a" style="left:1058.5px;top:94.5px;width:21.5px;height:1px;background:#2d2d2d"></div>
<div class="a" style="left:1058.5px;top:117.5px;width:21.5px;height:1px;background:#2d2d2d"></div>
<svg style="left:1064px;top:53px" width="11" height="12" viewBox="0 0 11 12"><path d="M5.5 0.8C7.6 0.8 9 2.4 9 4.2C9 5.6 8.2 6.4 7.4 7.4V8.4H3.6V7.4C2.8 6.4 2 5.6 2 4.2C2 2.4 3.4 0.8 5.5 0.8Z" fill="none" stroke="#dcdcdc" stroke-width="1"/><rect x="3.9" y="9" width="3.2" height="2.2" rx="0.6" fill="#e0e0e0"/></svg>
<svg style="left:1063px;top:77.6px" width="13" height="10" viewBox="0 0 13 10"><ellipse cx="6.5" cy="5" rx="5.7" ry="4.1" fill="none" stroke="#d0d0d0" stroke-width="1"/><path d="M2.6 6.4C3 4 5.4 2.6 7.6 3.4C9.2 4 9.8 5.2 9.8 6.6M4.6 7.8C4.4 6 6 4.8 7.6 5.6M1.6 4.6C3.2 2.2 6.4 1.6 8.6 2.6" fill="none" stroke="#c8c8c8" stroke-width="0.8"/></svg>
<svg style="left:1064px;top:100px" width="12" height="12" viewBox="0 0 12 12"><path d="M4.6 2.6C4.2 1.4 5 0.6 6 0.6C7 0.6 7.8 1.4 7.4 2.6H9.6V5C10.8 4.6 11.4 5.4 11.4 6.2C11.4 7.2 10.6 7.8 9.6 7.4V10.6H7.2C7.6 9.4 6.8 8.8 6 8.8C5.2 8.8 4.4 9.4 4.8 10.6H1.8V7.6C0.8 8 0.6 7.2 0.6 6.4C0.6 5.6 1 4.8 1.8 5.2V2.6Z" fill="none" stroke="#d8d8d8" stroke-width="1"/></svg>
<!-- ===== color panel ===== -->
<div class="a" style="left:911.3px;top:46.5px;width:145.4px;height:15.5px;background:#262626"></div>
<div class="a" style="left:911.3px;top:46.5px;width:23.2px;height:15.5px;background:#323232"></div>
<div class="t" style="left:916.2px;top:49.8px;color:#ececec">颜色</div>
<div class="t" style="left:940.6px;top:49.8px;color:#8e8e8e">色板</div>
<div class="t" style="left:965.6px;top:49.8px;color:#8e8e8e">历史记录</div>
<svg style="left:1048px;top:51.6px" width="6" height="5" viewBox="0 0 6 5"><path d="M0 0.5H5.6M0 1.9H5.6M0 3.3H5.6M0 4.6H5.6" stroke="#6c6c6c" stroke-width="0.8"/></svg>
<div class="a" style="left:921.8px;top:74px;width:10.4px;height:10px;background:#ffffff;border:0.6px solid #bdbdbd"></div>
<div class="a" style="left:915.8px;top:68px;width:10.6px;height:10.2px;background:#88b80e;border:1px solid #a6c846"></div>
<div class="a" style="left:936px;top:66px;width:92px;height:142.5px;background:linear-gradient(to bottom,rgba(0,0,0,0),#000),linear-gradient(to right,#ffffff,#b9e412)"></div>
<svg style="left:1018px;top:100.4px" width="7" height="7" viewBox="0 0 7 7"><circle cx="3.5" cy="3.5" r="2.6" fill="none" stroke="#26330c" stroke-width="0.9"/></svg>
<div class="a" style="left:1037.2px;top:66px;width:11px;height:142.5px;background:linear-gradient(to bottom,#ff1a1a 0%,#ff00ff 16.67%,#2a2aff 33.33%,#00e8ff 50%,#00e020 66.67%,#fff000 83.33%,#ff2a10 100%)"></div>
<svg style="left:1031.6px;top:176px" width="4.4" height="5" viewBox="0 0 4.4 5"><path d="M0.4 0.3L4 2.5L0.4 4.7Z" fill="#e0e0e0"/></svg>
<div class="a" style="left:911.3px;top:218.6px;width:145.4px;height:1.7px;background:#262626"></div>
<!-- ===== properties panel ===== -->
<div class="a" style="left:911.3px;top:220.3px;width:145.4px;height:16.7px;background:#262626"></div>
<div class="a" style="left:911.3px;top:220.3px;width:23.7px;height:16.7px;background:#323232"></div>
<div class="t" style="left:916.5px;top:224.6px;color:#ececec">属性</div>
<div class="t" style="left:941.2px;top:224.6px;color:#7a7a7a">调整</div>
<svg style="left:1048px;top:226.6px" width="6" height="5" viewBox="0 0 6 5"><path d="M0 0.5H5.6M0 1.9H5.6M0 3.3H5.6M0 4.6H5.6" stroke="#6c6c6c" stroke-width="0.8"/></svg>
<div class="a" style="left:911.3px;top:237px;width:145.4px;height:19.5px;background:#343434"></div>
<div class="a" style="left:1048px;top:256.5px;width:8.7px;height:88px;background:#2b2b2b"></div>
<div class="a" style="left:918px;top:241px;width:10.2px;height:10.6px;background:#1c1c1c"></div>
<svg style="left:919.4px;top:243.2px" width="7.6" height="6.4" viewBox="0 0 7.6 6.4"><rect x="0.4" y="0.4" width="6.8" height="5.6" fill="none" stroke="#eeeeee" stroke-width="0.8"/><path d="M0.6 5.8L2.8 2.8L4.2 4.4L5.2 3.4L7 5.8Z" fill="#eeeeee"/></svg>
<div class="t" style="left:933.7px;top:242px;font-size:7.1px;color:#d8d8d8">像素图层属性</div>
<div class="t" style="left:917.4px;top:263px;color:#9c9c9c">W:</div>
<div class="a" style="left:929.4px;top:262px;width:37.6px;height:10.8px;background:#2a2a2a;border:0.6px solid #363636"></div>
<div class="t" style="left:932px;top:263px;font-size:7px;color:#e4e4e4">370 像素</div>
<div class="a" style="left:972.5px;top:261px;width:12.5px;height:13px;background:#1e1e1e"></div>
<svg style="left:975px;top:265.6px" width="7.6" height="4" viewBox="0 0 7.6 4"><circle cx="2" cy="2" r="1.45" fill="none" stroke="#c8c8c8" stroke-width="0.8"/><circle cx="5.6" cy="2" r="1.45" fill="none" stroke="#c8c8c8" stroke-width="0.8"/></svg>
<div class="t" style="left:991.8px;top:263px;color:#9c9c9c">H:</div>
<div class="a" style="left:1001.2px;top:262px;width:38.2px;height:10.8px;background:#2a2a2a;border:0.6px solid #363636"></div>
<div class="t" style="left:1004.8px;top:263px;font-size:7px;color:#e4e4e4">370 像素</div>
<div class="t" style="left:918.6px;top:280.5px;color:#9c9c9c">X:</div>
<div class="a" style="left:929.4px;top:280px;width:37.6px;height:10.8px;background:#2a2a2a;border:0.6px solid #363636"></div>
<div class="t" style="left:932px;top:280.6px;font-size:7px;color:#e4e4e4">542 像素</div>
<div class="t" style="left:991.8px;top:280.5px;color:#9c9c9c">Y:</div>
<div class="a" style="left:1001.2px;top:280px;width:38.2px;height:10.8px;background:#2a2a2a;border:0.6px solid #363636"></div>
<div class="t" style="left:1004.8px;top:280.6px;font-size:7px;color:#e4e4e4">183 像素</div>
<div class="a" style="left:911.3px;top:358.6px;width:145.4px;height:1.7px;background:#262626"></div>
<!-- ===== layers panel ===== -->
<div class="a" style="left:911.3px;top:360.3px;width:145.4px;height:16.7px;background:#262626"></div>
<div class="a" style="left:911.3px;top:360.3px;width:23.7px;height:16.7px;background:#323232"></div>
<div class="t" style="left:916.5px;top:364.4px;color:#ececec">图层</div>
<div class="t" style="left:940.6px;top:364.4px;color:#8e8e8e">通道</div>
<div class="t" style="left:966.8px;top:364.4px;color:#8e8e8e">路径</div>
<svg style="left:1048px;top:366.6px" width="6" height="5" viewBox="0 0 6 5"><path d="M0 0.5H5.6M0 1.9H5.6M0 3.3H5.6M0 4.6H5.6" stroke="#6c6c6c" stroke-width="0.8"/></svg>
<!-- filter row -->
<div class="a" style="left:913px;top:382.2px;width:49.6px;height:10.8px;background:#262626;border-radius:1px"></div>
<svg style="left:916.6px;top:384.4px" width="7" height="7" viewBox="0 0 7 7"><circle cx="2.7" cy="2.7" r="1.9" fill="none" stroke="#d8d8d8" stroke-width="1"/><path d="M4.1 4.2L6.2 6.3" stroke="#d8d8d8" stroke-width="1.1"/></svg>
<div class="t" style="left:925.6px;top:382.7px;font-size:7px;color:#e0e0e0">类型</div>
<svg style="left:957px;top:386px" width="5" height="4" viewBox="0 0 5 4"><path d="M0.6 0.8L2.5 2.8L4.4 0.8" fill="none" stroke="#9a9a9a" stroke-width="0.8"/></svg>
<svg style="left:973px;top:383px" width="66" height="10" viewBox="0 0 66 10">
  <rect x="1.8" y="1.4" width="6.8" height="6.2" fill="none" stroke="#d4d4d4" stroke-width="0.9"/><path d="M2.2 7.2L4.2 4.2L5.4 5.8L6.4 4.8L8.2 7.2Z" fill="#d4d4d4"/>
  <circle cx="19" cy="4.6" r="3.1" fill="none" stroke="#d4d4d4" stroke-width="0.9"/><path d="M16.8 6.8A3.1 3.1 0 0 0 21.2 2.4Z" fill="#d4d4d4"/>
  <path d="M29.6 1.6H35.8V3.4H35V2.8H33.4V7H34.4V7.8H31V7H32V2.8H30.4V3.4H29.6Z" fill="#dcdcdc"/>
  <rect x="43.6" y="2.2" width="5.4" height="4.8" fill="none" stroke="#d4d4d4" stroke-width="0.9"/><rect x="42.6" y="1.2" width="1.8" height="1.8" fill="#d4d4d4"/><rect x="48.2" y="1.2" width="1.8" height="1.8" fill="#d4d4d4"/><rect x="42.6" y="6.2" width="1.8" height="1.8" fill="#d4d4d4"/><rect x="48.2" y="6.2" width="1.8" height="1.8" fill="#d4d4d4"/>
  <path d="M59 1.2H61.8L63.4 2.8V7.8H59Z" fill="none" stroke="#d4d4d4" stroke-width="0.9"/><rect x="57.2" y="4.8" width="3.4" height="3.2" fill="#e0e0e0"/>
</svg>
<div class="a" style="left:1047.8px;top:383.4px;width:4px;height:8px;background:#1f1f1f;border-radius:2px"></div>
<div class="a" style="left:1047.5px;top:382.4px;width:4.6px;height:4.6px;background:#d8d8d8;border-radius:50%"></div>
<!-- blend row -->
<div class="a" style="left:913px;top:399px;width:65.8px;height:11px;background:#262626;border-radius:1px"></div>
<div class="t" style="left:918px;top:399.5px;font-size:7px;color:#e0e0e0">正常</div>
<svg style="left:972.4px;top:403px" width="5" height="4" viewBox="0 0 5 4"><path d="M0.6 0.8L2.5 2.8L4.4 0.8" fill="none" stroke="#8a8a8a" stroke-width="0.8"/></svg>
<div class="t" style="left:984.3px;top:399.5px;font-size:7px;letter-spacing:0.2px;color:#9e9e9e">不透明度:</div>
<div class="a" style="left:1018px;top:399px;width:25px;height:11px;background:#2a2a2a;border:0.6px solid #353535"></div>
<div class="t" style="left:1020.5px;top:399.6px;font-size:7.4px;color:#e4e4e4">100%</div>
<div class="a" style="left:1044.4px;top:399px;width:7px;height:11px;background:#2a2a2a;border:0.6px solid #353535"></div>
<svg style="left:1045.6px;top:403px" width="5" height="4" viewBox="0 0 5 4"><path d="M0.6 0.8L2.5 2.8L4.4 0.8" fill="none" stroke="#8a8a8a" stroke-width="0.8"/></svg>
<!-- lock row -->
<div class="t" style="left:915px;top:416px;font-size:7px;letter-spacing:0.4px;color:#9e9e9e">锁定:</div>
<svg style="left:936px;top:416px" width="60" height="10" viewBox="0 0 60 10">
  <g fill="#dcdcdc"><rect x="1.2" y="1.6" width="2.2" height="2.2"/><rect x="5.6" y="1.6" width="2.2" height="2.2"/><rect x="3.4" y="3.8" width="2.2" height="2.2"/><rect x="1.2" y="6" width="2.2" height="2.2"/><rect x="5.6" y="6" width="2.2" height="2.2"/></g>
  <rect x="1.2" y="1.6" width="6.6" height="6.6" fill="none" stroke="#dcdcdc" stroke-width="0.6"/>
  <path d="M20.2 0.8C18.8 1.6 17 3.6 16 5L17.2 6.2C18.8 5.2 20.2 2.8 20.2 0.8Z" fill="#e0e0e0"/><path d="M15.4 5.6L16.6 6.8C16 8 14.6 8.8 13.2 8.6C14.2 8 14.4 6.6 15.4 5.6Z" fill="#e0e0e0"/>
  <path d="M28.6 0.6L30 2.4H29.1V4.4H31.1V3.5L32.9 4.9L31.1 6.3V5.4H29.1V7.4H30L28.6 9.2L27.2 7.4H28.1V5.4H26.1V6.3L24.3 4.9L26.1 3.5V4.4H28.1V2.4H27.2Z" fill="#e0e0e0"/>
  <path d="M39.4 1.2V7.8H45.8M37.6 3H44V8.4" fill="none" stroke="#d8d8d8" stroke-width="0.9"/><path d="M41 3.2L45 7" stroke="#d8d8d8" stroke-width="0.7"/>
  <rect x="50.8" y="4.6" width="6" height="4.4" rx="0.5" fill="#e0e0e0"/><path d="M52 4.6V3.2C52 1.2 55.6 1.2 55.6 3.2V4.6" fill="none" stroke="#e0e0e0" stroke-width="1"/><rect x="53.3" y="6" width="1" height="1.6" fill="#323232"/>
</svg>
<div class="t" style="left:998.7px;top:416px;font-size:7px;letter-spacing:0.6px;color:#9e9e9e">填充:</div>
<div class="a" style="left:1018px;top:415.6px;width:25px;height:11px;background:#2a2a2a;border:0.6px solid #353535"></div>
<div class="t" style="left:1020.5px;top:416.2px;font-size:7.4px;color:#e4e4e4">100%</div>
<div class="a" style="left:1044.4px;top:415.6px;width:7px;height:11px;background:#2a2a2a;border:0.6px solid #353535"></div>
<svg style="left:1045.6px;top:419.6px" width="5" height="4" viewBox="0 0 5 4"><path d="M0.6 0.8L2.5 2.8L4.4 0.8" fill="none" stroke="#8a8a8a" stroke-width="0.8"/></svg>
<!-- layer list -->
<div class="a" style="left:911.3px;top:431.2px;width:136.7px;height:61.6px;background:#272727"></div>
<div class="a" style="left:1048px;top:431.2px;width:8.7px;height:138px;background:#2d2d2d"></div>
<div class="a" style="left:928px;top:446px;width:120px;height:22.2px;background:#484848"></div>
<div class="a" style="left:911.3px;top:445.6px;width:136.7px;height:0.7px;background:#1f1f1f"></div>
<div class="a" style="left:911.3px;top:468.2px;width:136.7px;height:0.7px;background:#1f1f1f"></div>
<svg style="left:915.4px;top:435.4px" width="8" height="6" viewBox="0 0 8 6"><path d="M0.3 3C1.6 0.6 6.4 0.6 7.7 3C6.4 5.4 1.6 5.4 0.3 3Z" fill="#e6e6e6"/><circle cx="4" cy="3" r="1.25" fill="#272727"/></svg>
<svg style="left:915.4px;top:455px" width="8" height="6" viewBox="0 0 8 6"><path d="M0.3 3C1.6 0.6 6.4 0.6 7.7 3C6.4 5.4 1.6 5.4 0.3 3Z" fill="#e6e6e6"/><circle cx="4" cy="3" r="1.25" fill="#272727"/></svg>
<svg style="left:915.4px;top:478.6px" width="8" height="6" viewBox="0 0 8 6"><path d="M0.3 3C1.6 0.6 6.4 0.6 7.7 3C6.4 5.4 1.6 5.4 0.3 3Z" fill="#e6e6e6"/><circle cx="4" cy="3" r="1.25" fill="#272727"/></svg>
<svg style="left:930px;top:436.4px" width="5" height="4" viewBox="0 0 5 4"><path d="M0.6 0.8L2.5 2.8L4.4 0.8" fill="none" stroke="#9a9a9a" stroke-width="0.8"/></svg>
<div class="t" style="left:940.6px;top:433.4px;font-size:7px;font-weight:bold;color:#f0f0f0">画板 1</div>
<!-- thumbnails -->
<div class="a" style="left:946.2px;top:448.8px;width:30.8px;height:17.4px;background-color:#ffffff;background-image:conic-gradient(#d6d6d6 25%,#ffffff 0 50%,#d6d6d6 0 75%,#ffffff 0);background-size:3.8px 3.8px"></div>
<svg style="left:944.4px;top:447.2px" width="34.4" height="20.6" viewBox="0 0 34.4 20.6"><path d="M0.4 5V0.4H9M25.4 0.4H34V5M34 15.6V20.2H25.4M9 20.2H0.4V15.6" fill="none" stroke="#e8e8e8" stroke-width="0.8"/><circle cx="13.2" cy="8" r="2.3" fill="none" stroke="#5caa2a" stroke-width="0.9"/></svg>
<div class="t" style="left:983px;top:453px;font-size:7.1px;letter-spacing:0.35px;color:#e2e2e2">图层 1 拷贝</div>
<div class="a" style="left:946.2px;top:473px;width:30.8px;height:17px;background-color:#ffffff;background-image:conic-gradient(#d6d6d6 25%,#ffffff 0 50%,#d6d6d6 0 75%,#ffffff 0);background-size:3.8px 3.8px"></div>
<svg style="left:944.4px;top:471.4px" width="34.4" height="20.6" viewBox="0 0 34.4 20.6"><circle cx="10.8" cy="6.6" r="2.3" fill="none" stroke="#5caa2a" stroke-width="0.9"/></svg>
<div class="t" style="left:983px;top:476.6px;font-size:7px;color:#e2e2e2">图层 1</div>
<svg style="left:1033.2px;top:477.9px" width="6.2" height="7.1" viewBox="0 0 7 8"><rect x="0.7" y="3.4" width="5.6" height="4" rx="0.5" fill="none" stroke="#c4c4c4" stroke-width="0.9"/><path d="M1.9 3.4V2.4C1.9 0.6 5.1 0.6 5.1 2.4V3.4" fill="none" stroke="#c4c4c4" stroke-width="0.9"/></svg>
<!-- click highlight + cursor -->
<svg style="left:1023px;top:445px" width="30" height="30" viewBox="0 0 30 30">
  <defs><radialGradient id="clk" gradientUnits="userSpaceOnUse" cx="14.4" cy="13.2" r="13.4"><stop offset="0" stop-color="#44565f" stop-opacity="0.85"/><stop offset="0.42" stop-color="#46555c" stop-opacity="0.8"/><stop offset="0.62" stop-color="#6a3a36" stop-opacity="0.62"/><stop offset="0.86" stop-color="#7a2e2a" stop-opacity="0.45"/><stop offset="1" stop-color="#7a2e2a" stop-opacity="0"/></radialGradient></defs><circle cx="14.4" cy="13.2" r="13.4" fill="url(#clk)"/>
  <path d="M14.6 19.6V23.4L13.4 22.6C12.8 22.2 12.2 23 12.8 23.6L15 26.6H19.4L20.2 24.4V22.4C20.2 21.8 19.4 21.6 19.2 22C19 21.4 18.2 21.2 18 21.8C17.8 21.2 17 21 16.6 21.6V19.6C16.6 18.6 14.6 18.6 14.6 19.6Z" fill="#fbeeee" stroke="#d08a8a" stroke-width="0.5"/>
</svg>
<!-- layers bottom icons -->
<svg style="left:958px;top:568px" width="86" height="10" viewBox="0 0 86 10">
  <g fill="none" stroke="#bcbcbc" stroke-width="0.9">
    <rect x="16.6" y="2" width="6.4" height="5.4"/><circle cx="35" cy="4.8" r="2.9"/><rect x="62.4" y="2" width="5.4" height="5.6"/>
  </g>
  <g fill="#bcbcbc"><circle cx="19.8" cy="4.7" r="1.5"/><path d="M33 6.9A2.9 2.9 0 0 0 37 2.7Z"/><path d="M47 2.4H49.6L50.4 3.2H53.4V7.6H47Z"/><path d="M77.6 2.6H83.2V8H77.6Z"/><rect x="79" y="1.6" width="2.8" height="0.9"/></g>
</svg>
<div class="t" style="left:960px;top:567.4px;font-size:6.6px;font-style:italic;font-family:'Liberation Serif',serif;color:#c4c4c4">fx</div>
<!-- ===== status bar ===== -->
<div class="t" style="left:24.6px;top:570.4px;font-size:7px;color:#d0d0d0">66.67%</div>
<div class="a" style="left:52px;top:570.6px;width:99px;height:10px;overflow:hidden"><div class="t" style="right:0;top:0;font-size:7px;letter-spacing:0.5px;color:#bcbcbc">1920 像素 x 1080 像素 (72 ppi)</div></div>
<svg style="left:157px;top:574px" width="3" height="4" viewBox="0 0 4 5"><path d="M0.8 0.6L3 2.5L0.8 4.4" fill="none" stroke="#707070" stroke-width="0.9"/></svg>
<!-- h scrollbar -->
<div class="a" style="left:165px;top:571px;width:680px;height:10px;background:#2a2a2a"></div>
<div class="a" style="left:377px;top:572.3px;width:246px;height:7.4px;background:#404040"></div>
<svg style="left:840px;top:574.4px" width="3.6" height="4.5" viewBox="0 0 4 5"><path d="M0.8 0.6L3 2.5L0.8 4.4" fill="none" stroke="#8a8a8a" stroke-width="0.9"/></svg>
<svg style="left:849.3px;top:59.6px" width="4" height="3.2" viewBox="0 0 5 4"><path d="M0.6 3L2.5 1L4.4 3" fill="none" stroke="#6a6a6a" stroke-width="0.9"/></svg>
<svg style="left:849.3px;top:562.6px" width="4" height="3.2" viewBox="0 0 5 4"><path d="M0.6 1L2.5 3L4.4 1" fill="none" stroke="#6a6a6a" stroke-width="0.9"/></svg>
<!-- key press overlays -->
<div class="a" style="left:48.4px;top:501px;width:76.6px;height:37.2px;background:#2268bc;border-radius:4px"></div>
<div class="a" style="left:52.6px;top:505.2px;width:68.2px;height:28.8px;background:linear-gradient(to right,#444444 0,#444444 26.4px,#666666 26.4px,#666666 100%);border-radius:0.5px"></div>
<div class="a" style="left:52.6px;top:521px;width:68.2px;height:13px;background:#444444"></div>
<div class="t" style="left:48.4px;top:501px;width:76.6px;height:37.2px;line-height:33.8px;text-align:center;font-size:21.2px;letter-spacing:0.6px;color:#ffffff"><b style="font-weight:bold;font-size:19.5px;position:relative;top:-0.4px;left:-3.5px;letter-spacing:0;-webkit-text-stroke:1.1px #fff">[</b>左键<b style="font-weight:bold;font-size:19.5px;position:relative;top:-0.4px;left:2.3px;letter-spacing:0;-webkit-text-stroke:1.1px #fff">]</b></div>
<div class="a" style="left:48.4px;top:542.4px;width:76.6px;height:37.2px;background:#2268bc;border-radius:4px"></div>
<div class="a" style="left:52.6px;top:546.6px;width:68.2px;height:28.8px;background:#444444;border-radius:0.5px"></div>
<div class="t" style="left:48.4px;top:542.4px;width:76.6px;height:37.2px;line-height:33.8px;text-align:center;font-size:21.2px;letter-spacing:0.6px;color:#ffffff"><b style="font-weight:bold;font-size:19.5px;position:relative;top:-0.4px;left:-3.5px;letter-spacing:0;-webkit-text-stroke:1.1px #fff">[</b>左键<b style="font-weight:bold;font-size:19.5px;position:relative;top:-0.4px;left:2.3px;letter-spacing:0;-webkit-text-stroke:1.1px #fff">]</b></div>
<!-- ===== windows taskbar ===== -->
<div class="a" style="left:0;top:581px;width:1080px;height:27px;background:linear-gradient(to right,#35342f 0,#46483f 4%,#4c5049 8%,#3e4339 14%,#3a4035 22%,#353a33 30%,#363b34 40%,#394132 47%,#3c4b2b 51%,#3b4829 55.5%,#2a2c28 57.5%,#25272a 62%,#2b323b 66%,#3a4551 70%,#36404c 72.5%,#262a30 75.5%,#24282c 79%,#2a3b42 82%,#272c32 85%,#2c2c2c 88%,#2f2f2f 100%)"></div>
<div class="a" style="left:0;top:581px;width:1080px;height:27px;background:linear-gradient(to bottom,rgba(255,255,255,0.28) 0,rgba(255,255,255,0.2) 0.9px,rgba(255,255,255,0.03) 1.4px,rgba(0,0,0,0) 45%,rgba(0,0,0,0.16) 100%)"></div>
<!-- start orb -->
<div class="a" style="left:5.8px;top:582.4px;width:25.2px;height:25.2px;border-radius:50%;background:radial-gradient(ellipse 70% 45% at 50% 100%,#35b4f0 0,rgba(40,150,230,0) 100%),linear-gradient(to bottom,#9cc0dc 0,#5c93c6 38%,#1459a8 52%,#0c3f8a 100%);box-shadow:0 0 0 0.8px #a8cfe8 inset,0 0 2.4px 0.8px rgba(130,195,240,0.5)"></div>
<svg style="left:9.4px;top:585.4px" width="18" height="18" viewBox="0 0 16 16"><path d="M2 3.4C3.8 2.4 5.6 2.6 7.2 3.6L6.4 7.6C4.8 6.6 3 6.6 1.2 7.4Z" fill="#f26a24"/><path d="M8.4 4C10 5 11.8 5 13.8 4L13 8C11.2 9 9.4 8.8 7.6 7.8Z" fill="#86c440"/><path d="M1 8.6C2.8 7.8 4.6 7.8 6.2 8.8L5.4 12.8C3.8 11.8 2 11.8 0.2 12.6Z" fill="#2f9be8"/><path d="M7.4 9.2C9 10.2 10.8 10.2 12.8 9.2L12 13.2C10.2 14.2 8.4 14 6.6 13Z" fill="#f8bf26"/></svg>
<!-- icon: devices -->
<svg style="left:45px;top:584px" width="21" height="22" viewBox="0 0 21 22"><rect x="0.8" y="2.4" width="9" height="13.6" fill="#e8d9a0" stroke="#f4ecd0" stroke-width="0.8"/><rect x="2.2" y="4.4" width="6.2" height="5" fill="#6aa8d8"/><circle cx="5.2" cy="11.6" r="2.4" fill="#a8761a"/><path d="M3.4 2.4C3.4 0.2 7 0.2 7 2.4" fill="none" stroke="#e8e0c0" stroke-width="0.8"/><rect x="10.6" y="4" width="9.6" height="10.4" fill="#d8c9a0" stroke="#f0e8d0" stroke-width="0.7"/><rect x="11.8" y="5.4" width="7.2" height="6.4" fill="#5a2a14"/><path d="M13.4 10.2L17.6 6.4L18 9.4Z" fill="#f06428"/><rect x="6" y="16.4" width="10" height="1.6" fill="#1e1e1e"/><rect x="9.6" y="14.4" width="3" height="2.2" fill="#2a2a2a"/></svg>
<!-- icon: green recycle -->
<svg style="left:78px;top:583.6px" width="22" height="22" viewBox="0 0 22 22"><path d="M11 2.8C12.6 2.8 13.8 3.6 14.6 5L18.2 11.6C19.6 14.4 18 18 14.4 18H7.6C4 18 2.4 14.4 3.8 11.6L7.4 5C8.2 3.6 9.4 2.8 11 2.8Z" fill="none" stroke="#10b244" stroke-width="3.9" stroke-linejoin="round"/><path d="M11 8.4L13.4 13.6H8.6Z" fill="#3e4339"/></svg>
<!-- icon: xunlei bird -->
<div class="a" style="left:110px;top:583.4px;width:22.6px;height:22.6px;border-radius:3px;background:#2a9cf2"></div>
<svg style="left:110px;top:583.4px" width="22.6" height="22.6" viewBox="0 0 22.6 22.6"><path d="M2.4 8.2C4.8 7.4 7 8 8.8 9.4C10.8 6.2 14.4 4 19.4 3.6C17.6 5.2 16.6 6.6 16 8.4C17.6 8.2 19 8.4 20 9C17.8 9.6 16 10.8 14.8 12.600000000000001C13.6 15.4 11.2 17.4 8 18.2C9.4 16.4 10 14.8 9.8 13.2C8 12.6 6.4 11.6 5.4 10C4.6 9.2 3.6 8.6 2.4 8.2Z" fill="#ffffff"/></svg>
<!-- icon: shield -->
<svg style="left:143px;top:586.6px" width="19" height="16" viewBox="0 0 19 16"><path d="M0.6 6.4L9.4 2.6L18.4 6.4L9.4 9.4Z" fill="#2a2a4a" opacity="0.8"/><path d="M9.4 0.8C11 1.8 12.8 2.2 14.4 2.2C14.4 7.6 13 12 9.4 14.6C5.8 12 4.4 7.6 4.4 2.2C6 2.2 7.8 1.8 9.4 0.8Z" fill="#d8b82a"/><path d="M9.4 0.8V14.6M4.6 6.8H14.2" stroke="#2a3a8a" stroke-width="1.5"/><path d="M5 2.6H9V6.4H5Z" fill="#f0f0e0" opacity="0.75"/></svg>
<!-- icon: 5 -->
<div class="a" style="left:175.6px;top:583.2px;width:21.6px;height:22.4px;border-radius:2.4px;background:linear-gradient(#2aa6f0,#1a8fe0)"></div>
<div class="t" style="left:175.6px;top:583.2px;width:21.6px;height:22.4px;line-height:22px;text-align:center;font-size:20px;font-weight:bold;font-style:italic;color:#ffffff">5</div>
<!-- active Ps button -->
<div class="a" style="left:203.8px;top:581.6px;width:37px;height:26.4px;border-radius:2px;background:linear-gradient(to bottom,#d0d0cc 0,#b4b5b0 45%,#8e908c 55%,#a8aaa6 100%);border:0.8px solid #d8d8d4;opacity:0.95"></div>
<div class="a" style="left:211.4px;top:584.4px;width:20.6px;height:19.6px;background:#001c33;border:1.6px solid #2b9cd8"></div>
<div class="t" style="left:211.4px;top:584.4px;width:20.6px;height:19.6px;line-height:19.4px;text-align:center;font-size:12.4px;font-weight:bold;color:#35a6ea;letter-spacing:-0.3px">Ps</div>
<!-- icon: blue play -->
<svg style="left:246px;top:583px" width="22" height="23" viewBox="0 0 22 23"><path d="M1.2 2.6C1.2 1.2 2.4 0.6 3.6 1.2L19.6 10C20.8 10.8 20.8 12.4 19.6 13.2L3.6 22C2.4 22.6 1.2 22 1.2 20.6Z" fill="#1f93ea"/><path d="M1.2 11.6H20.4C20.4 12.2 20.2 12.8 19.6 13.2L3.6 22C2.4 22.6 1.2 22 1.2 20.6Z" fill="#1678d2"/><path d="M1.2 6.6L10.2 11.6L1.2 16.6Z" fill="#ffffff"/></svg>
<!-- icon: M -->
<div class="a" style="left:280px;top:583.2px;width:22px;height:22.4px;background:#4455b6"></div>
<svg style="left:280px;top:583.2px" width="22" height="22.4" viewBox="0 0 22 22.4"><path d="M2.6 3.4H8.4L11.4 11.2L8.4 18.8H2.6Z" fill="#ffffff"/><path d="M13.4 3.4H19.4V18.8H13.4L10.6 11.2Z" fill="#e4e4e4"/><path d="M8.4 3.4L11.4 11.2L8.4 18.8L13.4 18.8L10.6 11.2L13.4 3.4Z" fill="#b0b0b8"/></svg>
<!-- icon: teamviewer -->
<div class="a" style="left:312.2px;top:583.2px;width:22.2px;height:22.4px;background:#0e76d6"></div>
<svg style="left:312.2px;top:583.2px" width="22.2" height="22.4" viewBox="0 0 22.2 22.4"><circle cx="11.1" cy="11.2" r="9.2" fill="#ffffff"/><path d="M3 11.2L7.6 8V10.2H14.6V8L19.2 11.2L14.6 14.4V12.2H7.6V14.4Z" fill="#0e6fd0"/></svg>
<!-- icon: cyan arrow doc -->
<svg style="left:348px;top:585.4px" width="19" height="19.4" viewBox="0 0 19 19.4"><path d="M0.6 0.6H12L18.4 7V18.8H5L0.6 14.6Z" fill="#ffffff"/><path d="M3.4 5.8H12V9.4H3.4Z M5.2 12.4H18.4V18.8H5.2Z" fill="#18a6da"/><path d="M8.4 9.4H12V7L17 11L12 15V12.6H8.4Z" fill="#ffffff"/></svg>
<!-- icon: recorder -->
<div class="a" style="left:378px;top:585.4px;width:20px;height:16.4px;background:#4a4a4c"></div>
<svg style="left:378px;top:585.4px" width="20" height="16.4" viewBox="0 0 20 16.4"><rect x="2.6" y="2.6" width="14.8" height="10.4" rx="3" fill="#050505"/><circle cx="10.6" cy="7.6" r="3.4" fill="#f01818"/><path d="M2.2 4V2.2H4M16 2.2H17.8V4M17.8 12V13.8H16M4 13.8H2.2V12" fill="none" stroke="#d0d0d0" stroke-width="0.6"/></svg>
<!-- icon: screen rec -->
<svg style="left:410px;top:585.6px" width="22" height="18" viewBox="0 0 22 18"><rect x="0.8" y="0.8" width="20.4" height="12.4" fill="#f2f2f2"/><rect x="4" y="2.6" width="9.6" height="7.6" fill="#dfe6f4" stroke="#8a94b0" stroke-width="0.6"/><circle cx="14.4" cy="8.4" r="2.7" fill="#e0363a"/><rect x="8.4" y="13.2" width="5.2" height="1.8" fill="#0a0a0a"/><rect x="5.6" y="15" width="10.8" height="1.5" fill="#0a0a0a"/></svg>
<!-- icon: pink bilibili -->
<div class="a" style="left:442.6px;top:583.2px;width:22.4px;height:22.4px;border-radius:4.4px;background:#f6709a"></div>
<div class="a" style="left:443px;top:585.2px;width:6.6px;height:3.4px;background:#ffffff;border-radius:0.8px 0.8px 1.6px 0.8px"></div>
<div class="t" style="left:443.6px;top:584.4px;font-size:3px;line-height:5px;height:5px;font-weight:bold;color:#f6709a">UP</div>
<div class="t" style="left:441.6px;top:590.4px;width:24.4px;text-align:center;font-size:8.6px;font-weight:bold;letter-spacing:-0.75px;color:#ffffff">bilibili</div>
<!-- icon: red X -->
<div class="a" style="left:475.6px;top:583.6px;width:21.8px;height:21.6px;background:#e8293b"></div>
<svg style="left:475.6px;top:583.6px" width="21.8" height="21.6" viewBox="0 0 21.8 21.6"><path d="M2.4 5.4C6 5 8.8 6.8 10.9 9C13 6.8 15.8 5 19.4 5.4C18.2 7.8 16.2 9.6 13.6 10.8C16.2 12 18.2 13.8 19.4 16.2C15.8 16.6 13 14.8 10.9 12.6C8.8 14.8 6 16.6 2.4 16.2C3.6 13.8 5.6 12 8.2 10.8C5.6 9.6 3.6 7.8 2.4 5.4Z" fill="#ffffff"/></svg>
<!-- icon: chrome -->
<div class="a" style="left:508.6px;top:583.8px;width:21px;height:21px;border-radius:50%;background:conic-gradient(from -60deg,#e0432f 0 120deg,#f7c52a 120deg 240deg,#279a4b 240deg 360deg)"></div>
<div class="a" style="left:514.2px;top:589.4px;width:9.8px;height:9.8px;border-radius:50%;background:#3f85e8;border:1.5px solid #f4f4f4"></div>
<!-- icon: red calculator -->
<div class="a" style="left:541.4px;top:583.8px;width:20.6px;height:20.6px;border-radius:50%;background:#cf1f22;border:1.1px solid #f4dcdc"></div>
<svg style="left:546.6px;top:588px" width="10.4" height="12.4" viewBox="0 0 10.4 12.4"><rect x="0.7" y="0.7" width="9" height="11" rx="0.8" fill="none" stroke="#fff" stroke-width="1.1"/><path d="M1 4H9.6M1 6.8H9.6M1 9.4H9.6M3.8 4V11.4M6.8 4V11.4" stroke="#fff" stroke-width="0.8"/></svg>
<!-- toolbar chevrons -->
<div class="a" style="left:588.4px;top:581.6px;width:10.2px;height:26.4px;border-left:0.8px solid rgba(190,200,170,0.4);border-right:0.8px solid rgba(190,200,170,0.4);background:rgba(255,255,255,0.03)"></div>
<svg style="left:591px;top:585.6px" width="5" height="18" viewBox="0 0 5 18"><path d="M0.4 2.6L2.5 0.6L4.6 2.6ZM0.4 15L2.5 17L4.6 15Z" fill="#b8bca8"/></svg>
<!-- ===== system tray ===== -->
<svg style="left:624px;top:588px" width="400" height="14" viewBox="0 0 400 14">
  <!-- 630: orange x -->
  <rect x="1.6" y="1.6" width="11" height="10.6" fill="#f07a32"/><path d="M4 10.2L10.2 3.4M4.4 4.6C6.2 6 8.4 8.2 9.8 10.2" stroke="#fff2e0" stroke-width="1.5" fill="none"/>
  <!-- 648: blue doc -->
  <rect x="19.2" y="2" width="9.2" height="9.6" fill="#3c9fe8"/><rect x="24.6" y="2" width="3.8" height="9.6" fill="#8cc8f4"/>
  <!-- 664: grid -->
  <rect x="34.6" y="2" width="4.6" height="3.6" fill="#e8e8e8"/><rect x="40.4" y="2" width="4.6" height="3.6" fill="#e8e8e8"/><rect x="34.6" y="6.8" width="10.4" height="4.6" fill="#f0f0f0"/><path d="M36 8.8H43.6" stroke="#5a5a5a" stroke-width="0.8"/>
  <!-- 681: orange ring magnifier -->
  <circle cx="59.6" cy="5.4" r="3.1" fill="none" stroke="#f08a1c" stroke-width="2"/><path d="M57 8.2L53 12" stroke="#f08a1c" stroke-width="2.2"/>
  <!-- 698: nvidia -->
  <rect x="69.6" y="1.8" width="10.4" height="10.6" rx="1" fill="#2e332c" stroke="#5a5f58" stroke-width="0.7"/><path d="M71.6 7C73 5 76 4.6 78.200000000000003 6.4C76.4 8.6 73.6 9 71.6 7Z" fill="none" stroke="#76b900" stroke-width="1.1"/>
  <!-- 715: chrome -->
  <circle cx="91.4" cy="7" r="5.2" fill="#e0432f"/><path d="M91.4 7L86.6 9.4A5.2 5.2 0 0 0 92.4 12.100000000000001Z" fill="#279a4b"/><path d="M91.4 7L92.4 12.1A5.2 5.2 0 0 0 96.4 5.6Z" fill="#f7c52a"/><path d="M91.4 7L86.4 8.4A5.2 5.2 0 0 0 89.4 11.8Z" fill="#279a4b"/><circle cx="91.4" cy="7" r="2.2" fill="#3f85e8" stroke="#f4f4f4" stroke-width="0.7"/>
  <!-- 732: water drop -->
  <path d="M108.4 1.6C109.8 4 111.8 6 111.8 8.4C111.8 10.4 110.2 11.8 108.4 11.8C106.6 11.8 105 10.4 105 8.4C105 6 107 4 108.4 1.6Z" fill="#e8eef2"/><path d="M106.2 8.6C106.4 10 107.4 10.8 108.6 10.8" stroke="#8aa0b0" stroke-width="0.8" fill="none"/>
  <!-- 749: mouse cursor arrow -->
  <path d="M119.6 1.2V10.8L122.2 8.6L124 12.2L125.8 11.4L124 8L127.2 7.6Z" fill="#0a0a0a" stroke="#f0f0f0" stroke-width="0.8"/><path d="M124.4 8.4H130M127.2 5.6V11.2" stroke="#f0f0f0" stroke-width="2.2"/><path d="M124.8 8.4H129.6M127.2 6V10.8" stroke="#101010" stroke-width="0.9"/>
  <!-- 766: colourful -->
  <rect x="138" y="1.6" width="3.6" height="5.4" fill="#3a7ae0"/><rect x="142.6" y="1.6" width="3.6" height="5.4" fill="#e8c82a"/><path d="M138 7.4H141.6V11L139.8 12.4L138 11Z" fill="#e04a3a"/><path d="M142.6 7.4H146.2V11L144.4 12.4L142.6 11Z" fill="#4ab04a"/>
  <!-- 782: grey grid -->
  <rect x="153.6" y="1.6" width="10.4" height="10.6" rx="0.8" fill="#dcdcdc"/><path d="M158.8 1.6V12.2M153.6 6.6H164" stroke="#6a6a6a" stroke-width="0.9"/><rect x="160" y="2.8" width="2.8" height="2.6" fill="#8a8a8a"/><rect x="160" y="7.8" width="2.8" height="3.2" fill="#7a7a7a"/>
  <!-- 800: netease red -->
  <rect x="170.4" y="1.2" width="11.4" height="11.4" rx="2" fill="#e23a24"/><circle cx="176" cy="7.4" r="2.7" fill="none" stroke="#fff" stroke-width="1"/><path d="M176 7.4C175.6 5.4 176.4 3.6 178.2 3.2" stroke="#fff" stroke-width="0.9" fill="none"/>
  <!-- 816: record -->
  <circle cx="192.4" cy="7" r="5.2" fill="#1a1a1a" stroke="#c8c8c8" stroke-width="1.1"/><circle cx="192.4" cy="7" r="2.9" fill="#ec3022"/>
  <!-- 833: white doc -->
  <rect x="204.4" y="2" width="10.4" height="9.8" fill="#f0f0f0"/><rect x="206" y="3.6" width="7.2" height="6.6" fill="#a8c8ec"/><circle cx="210.6" cy="7" r="2" fill="none" stroke="#f4f4f4" stroke-width="0.9"/>
  <!-- 850: bluetooth -->
  <ellipse cx="226" cy="7" rx="3.3" ry="5.4" fill="#1766c2"/><path d="M224.2 4.8L227.8 8.8L226 10.4V3.6L227.8 5.2L224.2 9.2" stroke="#fff" stroke-width="0.9" fill="none"/>
  <!-- 867: white glyph -->
  <path d="M237.6 3H248.8M240.8 3V11.6M244.2 3V11.6M247.6 4.6V11.6M239.2 6.6C239.2 9 238.6 10.6 237.6 11.6" stroke="#f4f4f4" stroke-width="1.3" fill="none"/>
  <!-- 885: green speaker -->
  <path d="M256 5.2H258.6L262.4 2V12L258.6 8.8H256Z" fill="#1f9a72"/><path d="M262.8 2.6C266.4 4 266.4 10 262.8 11.4Z" fill="#28b487"/>
  <!-- 901: usb safely remove -->
  <path d="M272.4 5.4L278.6 4V6.4L274.2 7.6Z" fill="#c8c8c8"/><rect x="277.4" y="4.6" width="3.6" height="2.6" fill="#9a9a9a"/><circle cx="279.6" cy="9.4" r="2.6" fill="#5a9a2a"/><path d="M278.2 9.4L279.4 10.4L281 8.4" stroke="#e8f4d8" stroke-width="0.7" fill="none"/>
  <!-- 917: blue usb stick -->
  <rect x="291" y="1.4" width="4.6" height="2.4" fill="#e8f0f8"/><rect x="290" y="3.8" width="6.6" height="8.4" rx="1" fill="#5aa2e6"/><rect x="292.8" y="5.6" width="1.1" height="4.8" fill="#e8f4ff"/>
  <!-- 934: sogou S -->
  <rect x="304.6" y="1.4" width="11.4" height="11.4" rx="2.2" fill="#ee4a1c"/>
  <!-- 951: orange window -->
  <rect x="321.6" y="1.6" width="11" height="11" rx="0.8" fill="#f5a13a"/><rect x="323" y="4.6" width="8.2" height="6.6" fill="#f28a1e"/><path d="M323 3.2H331.2" stroke="#fff0d0" stroke-width="0.8"/><rect x="326" y="3.8" width="2" height="2.4" fill="#fbd28a"/>
  <!-- 968: yellow shield -->
  <path d="M339 1.8H348.6V6.6C348.6 9.6 346.6 11.6 343.8 12.6C341 11.6 339 9.6 339 6.6Z" fill="#f2b21c"/><path d="M345.4 4C343.6 5.4 342.4 7.8 342.6 11.6C344.2 10.2 345.6 7.6 345.4 4Z" fill="#fff6da"/>
  <!-- 985: flag -->
  <path d="M357 2V12.6" stroke="#f0f0f0" stroke-width="1.1"/><path d="M357.6 2.4H363.4V4.6H366.6L364.2 7.8H357.6Z" fill="#f4f4f4"/>
  <!-- 1002: network -->
  <rect x="373" y="2.4" width="4.6" height="4" fill="#d8d8d8"/><rect x="376.6" y="4.6" width="8.2" height="6" fill="none" stroke="#c8c8c8" stroke-width="1"/><rect x="373.6" y="8.6" width="3.4" height="3.4" fill="#b8b8b8"/><rect x="379.2" y="11" width="3" height="1.4" fill="#d8d8d8"/>
  <!-- 1018: speaker -->
  <path d="M390.6 5.2H392.6L395.8 2.2V12L392.6 9H390.6Z" fill="#f0f0f0"/><path d="M397.4 4.6C398.6 6 398.6 8.2 397.4 9.6" stroke="#c8c8c8" stroke-width="0.8" fill="none"/>
</svg>
<div class="t" style="left:928.6px;top:589px;width:11.4px;text-align:center;font-size:10px;font-weight:bold;color:#ffffff">S</div>
<!-- clock -->
<div class="t" style="left:1031px;top:584.2px;width:48px;text-align:center;font-size:8.4px;color:#f2f2f2;letter-spacing:0.1px">2:37:08</div>
<div class="t" style="left:1031px;top:596.4px;width:48px;text-align:center;font-size:8.4px;color:#f2f2f2;letter-spacing:0.25px">2018/11/16</div>
<!-- ===== watermark ===== -->
<svg style="left:916px;top:539px" width="44" height="37" viewBox="0 0 44 37">
  <path d="M15.4 0.8C23.6 0.8 30.2 6 30.2 12.6C30.2 19.2 23.6 24.4 15.4 24.4C13.4 24.4 11.4 24 9.6 23.4L4.4 26.4L6 21.6C2.8 19.4 0.8 16.2 0.8 12.6C0.8 6 7.2 0.8 15.4 0.8Z" fill="#e4e4e4"/>
  <circle cx="9.6" cy="9" r="1.9" fill="#2a2a2a"/><circle cx="21" cy="9" r="1.9" fill="#2a2a2a"/>
  <path d="M29.8 12.6C37.2 12.6 43 17.4 43 23.6C43 27 41.2 29.8 38.6 31.8L39.8 36L35.2 33.4C33.6 34 31.8 34.4 29.8 34.4C22.6 34.4 16.6 29.6 16.6 23.6C16.6 17.4 22.6 12.6 29.8 12.6Z" fill="#e4e4e4" stroke="#2e2e2e" stroke-width="1.2"/>
  <circle cx="25.2" cy="20" r="1.7" fill="#2a2a2a"/><circle cx="34.4" cy="20" r="1.7" fill="#2a2a2a"/>
</svg>
<div class="t" style="left:964.6px;top:542px;height:36px;line-height:36px;font-size:25.8px;font-weight:400;color:#ffffff">多乐君</div>

</div>
</body>
</html>
